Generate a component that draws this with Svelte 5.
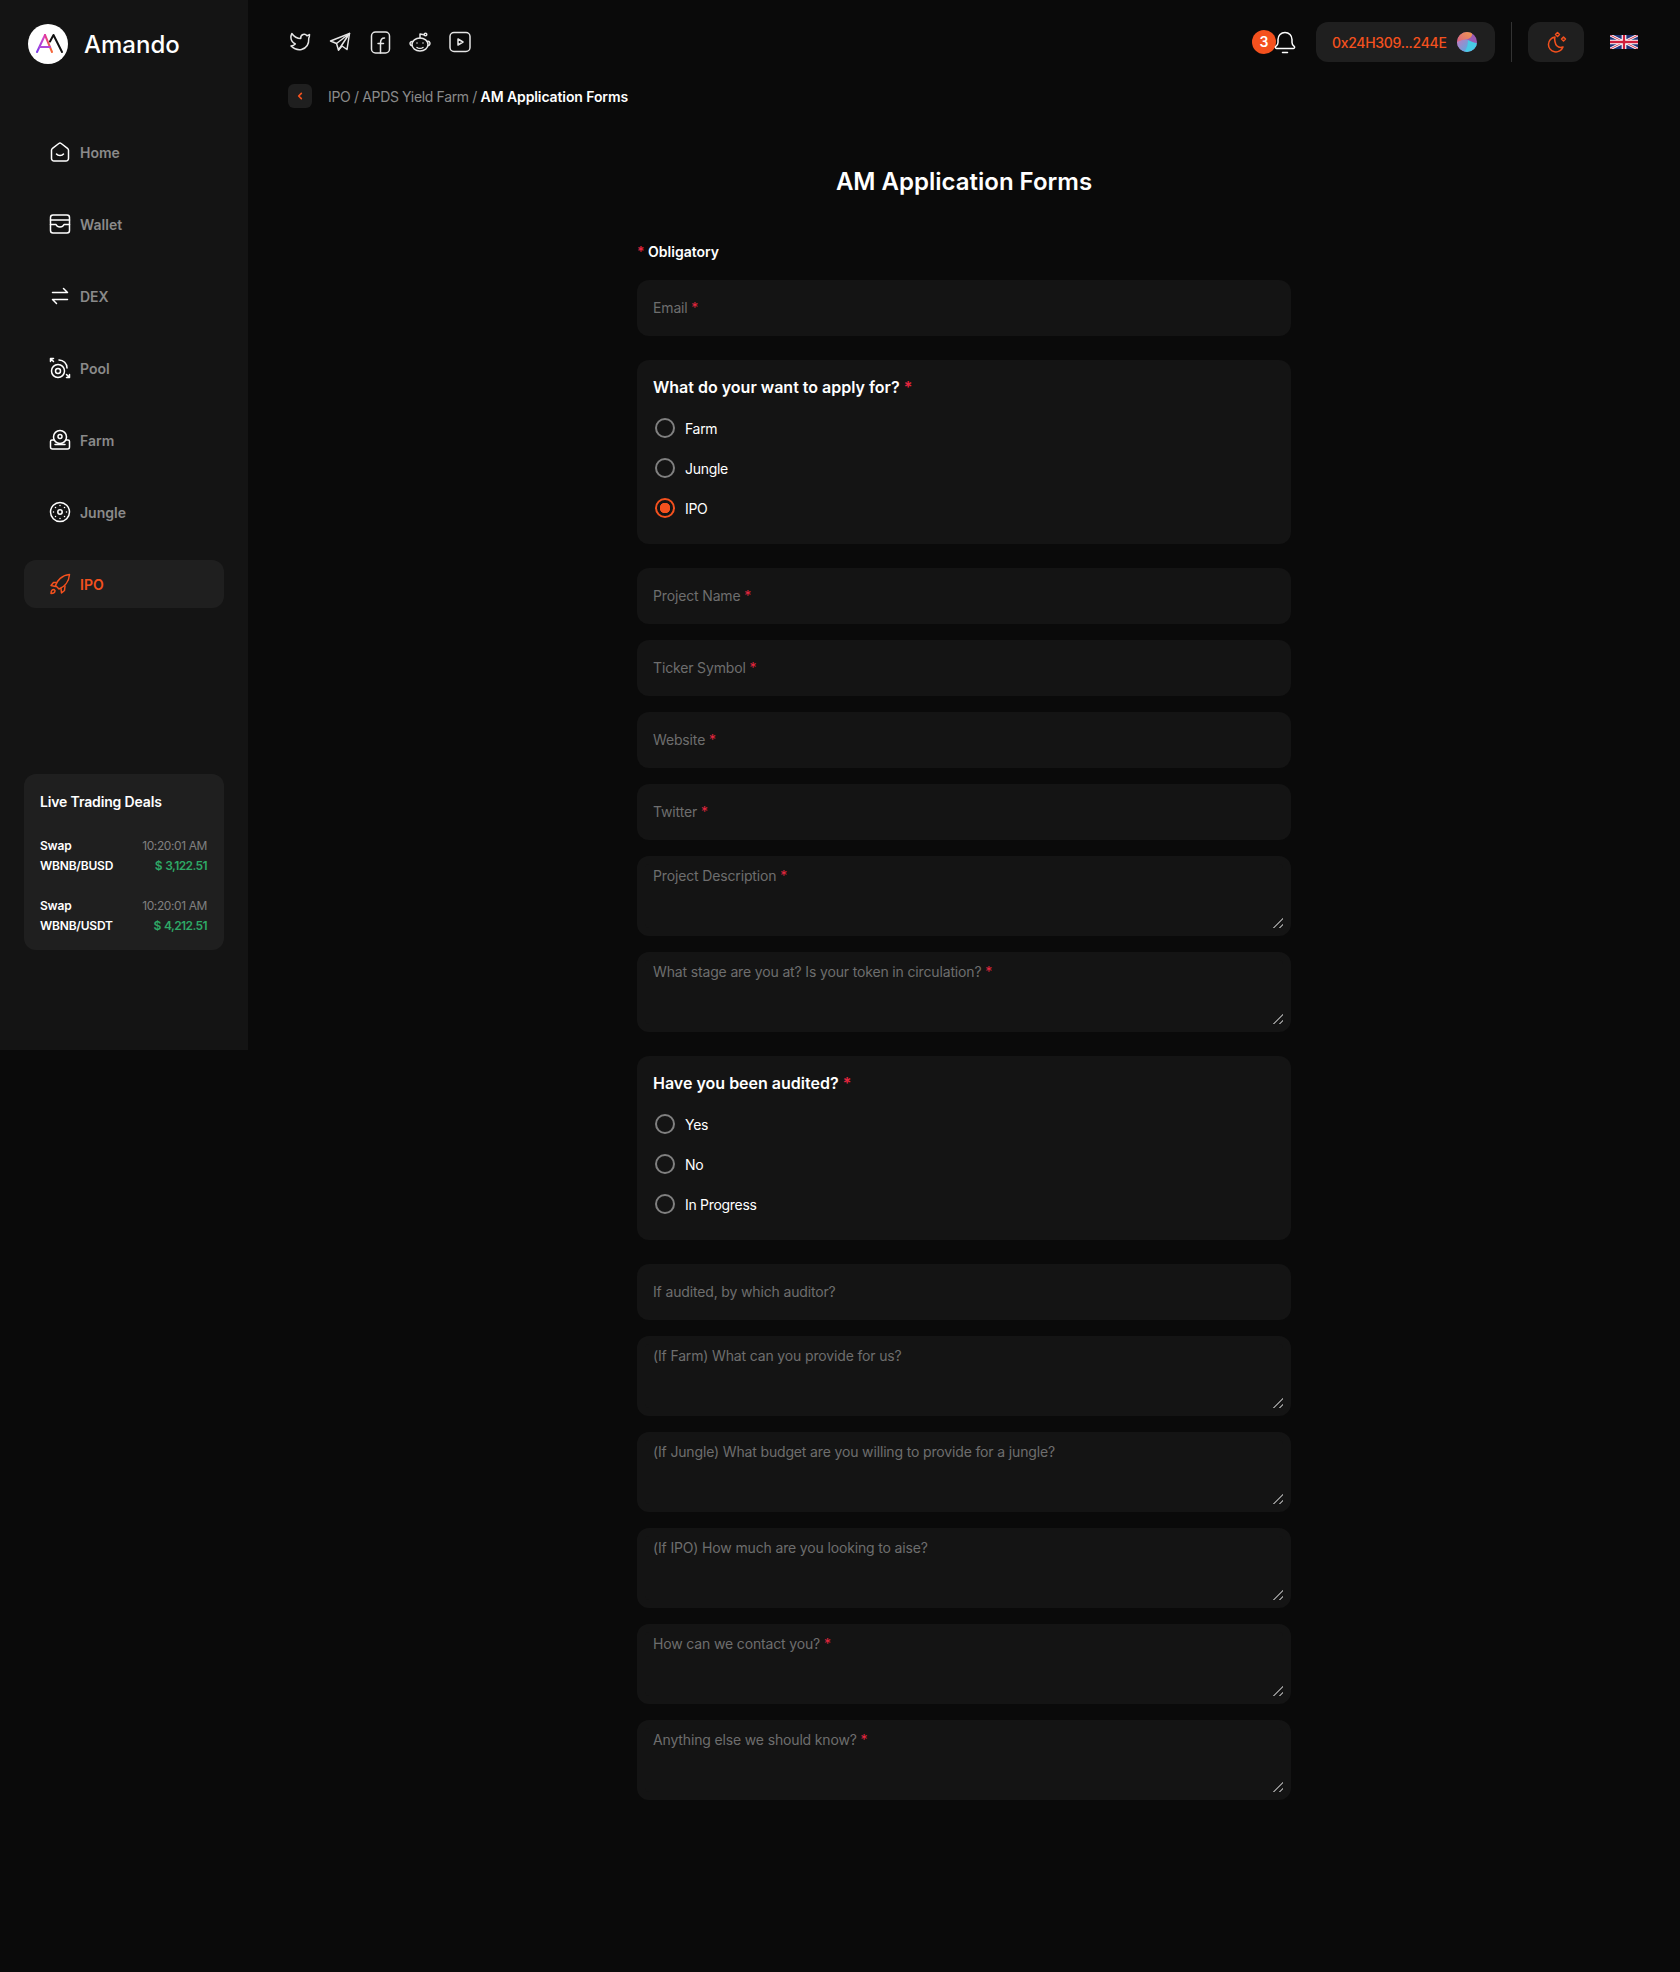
<script>
  const nav = [
    { label: 'Home', icon: 'home' },
    { label: 'Wallet', icon: 'wallet' },
    { label: 'DEX', icon: 'dex' },
    { label: 'Pool', icon: 'pool' },
    { label: 'Farm', icon: 'farm' },
    { label: 'Jungle', icon: 'jungle' },
    { label: 'IPO', icon: 'rocket', active: true }
  ];

  const deals = [
    { pair: 'WBNB/BUSD', value: '$ 3,122.51' },
    { pair: 'WBNB/USDT', value: '$ 4,212.51' }
  ];

  const socials = ['twitter', 'telegram', 'facebook', 'reddit', 'youtube'];

  const firstInputs = ['Project Name', 'Ticker Symbol', 'Website', 'Twitter'];
  const firstAreas = ['Project Description', 'What stage are you at? Is your token in circulation?'];
  const lastAreas = [
    { label: '(If Farm) What can you provide for us?' },
    { label: '(If Jungle) What budget are you willing to provide for a jungle?' },
    { label: '(If IPO) How much are you looking to aise?' },
    { label: 'How can we contact you?', required: true },
    { label: 'Anything else we should know?', required: true }
  ];
</script>

{#snippet icon(name)}
  <svg class="icon" viewBox="0 0 24 24" fill="none" stroke="currentColor" stroke-width="1.5" stroke-linecap="round" stroke-linejoin="round">
    {#if name === 'home'}
      <path d="M10.800 3.500 4.500 8.300A2.500 2.500 0 0 0 3.500 10.300V18.500a2.500 2.500 0 0 0 2.500 2.500h12a2.500 2.500 0 0 0 2.500-2.500v-8.200a2.500 2.500 0 0 0-1-2L13.200 3.500a2 2 0 0 0-2.400 0z" />
      <path d="M8.500 14c1.500 2 5.500 2 7 0" />
    {:else if name === 'wallet'}
      <rect x="2.500" y="3" width="19" height="18" rx="2.500" />
      <path d="M2.500 8h19M2.500 12.500h5.500c.8 2 2 2.500 4 2.500s3.200-.5 4-2.500h5.500" />
    {:else if name === 'dex'}
      <path d="M4.500 8.500h15l-4-4M19.500 15.500h-15l4 4" />
    {:else if name === 'pool'}
      <circle cx="10" cy="15" r="6.500" />
      <circle cx="10" cy="15" r="2.500" />
      <path d="M11 4a8 8 0 0 1 8 8" />
      <path d="M2.500 2.500l3 3M2.500 5.500v-3h3M18.500 18.500l3 3M21.500 18.500v3h-3" />
    {:else if name === 'farm'}
      <circle cx="12" cy="9" r="6.500" />
      <circle cx="12" cy="8.500" r="2" />
      <path d="M6 12H4a1.500 1.500 0 0 0-1.500 1.500V19A2 2 0 0 0 4.500 21h15a2 2 0 0 0 2-2v-5.500A1.500 1.500 0 0 0 20 12h-2" />
      <path d="M7 16.500h10" />
    {:else if name === 'jungle'}
      <circle cx="12" cy="12" r="9.500" />
      <circle cx="12" cy="12" r="2.200" />
      <path d="M12 5.500v.01M12 18.500v.01M5.500 12h.01M18.500 12h.01M7.500 7.500v.01M16.500 7.500v.01M7.500 16.500v.01M16.500 16.500v.01" />
    {:else if name === 'rocket'}
      <path d="M9 15 7.500 13.500C9 8.500 14 3 21.500 2.500c-.5 7.500-5.500 12.500-10.500 14.500z" />
      <path d="M8 10.500H5.500L3 13.500l4.500 1M13 16.500l.5 4.500 3-2.500.5-4.500" />
      <path d="M6 17.500c-1.500 0-3 1.500-3 4 2.500 0 4-1.500 4-3z" />
    {:else if name === 'twitter'}
      <path d="M21.500 4.500c-1 .8-1.800 1-2.500 1.200-1-1.300-2.500-1.800-4-1.200-1.700.7-2.500 2.300-2.200 4-3.300 0-6.800-1.800-9-5-.5 1-3 7 3.500 10.500-1 1-2.800 1.800-4.300 2 3 2.800 6.500 4.500 10.500 3.500 5-1.300 7.500-6 7.300-11.500.4-.5.700-1.700.7-3.500z" />
    {:else if name === 'telegram'}
      <path d="M21.500 3.500 2.500 11l6 2.500 2 6.500 3.500-4 5 3.500z" />
      <path d="M21.500 3.500 8.500 13.500M21.500 3.500 10.500 20" />
    {:else if name === 'facebook'}
      <rect x="3.500" y="2" width="18" height="21" rx="4" />
      <path d="M12.500 23v-10c0-3 1-5 4-5M10 13.500h5.500" />
    {:else if name === 'reddit'}
      <ellipse cx="12" cy="14.500" rx="8" ry="6.500" />
      <path d="M12 8V4l4 .8" />
      <circle cx="17.500" cy="4.500" r="1.300" />
      <path d="M4.800 11.500A2 2 0 1 0 3.500 15.500M19.200 11.500a2 2 0 1 1 1.300 4" />
      <path d="M9 17.500c1.500 1 4.500 1 6 0M9 13v.01M15 13v.01" />
    {:else if name === 'youtube'}
      <rect x="2" y="2.500" width="20" height="19" rx="4" />
      <path d="M10 9l5 3-5 3z" />
    {:else if name === 'bell'}
      <path d="M12 2.500c-4 0-7 3-7 7v3c0 2-1 3-2.200 3.800-.8.600-.4 2.200.7 2.200h17c1.100 0 1.500-1.600.7-2.200-1.200-.8-2.200-1.800-2.200-3.800v-3c0-4-3-7-7-7z" />
      <path d="M9.500 22.500h5" />
    {:else if name === 'moon'}
      <path d="M11 7a7.500 7.500 0 1 0 8 10c-2 .8-4.500.5-6.200-1.200S10.200 9 11 7z" />
      <path d="M13.500 2.500 15.500 4.500 13.500 6.500 11.500 4.500zM19.500 7 21.500 9 19.500 11 17.500 9z" />
    {/if}
  </svg>
{/snippet}

<div class="page">
  <aside class="sidebar">
    <div class="brand">
      <div class="logo">
        <svg viewBox="0 0 40 40" fill="none" stroke-width="2" stroke-linecap="round" stroke-linejoin="round">
          <defs>
            <linearGradient id="amLeft" x1="0" y1="1" x2="0.6" y2="0">
              <stop offset="0" stop-color="#7c3aed" />
              <stop offset="1" stop-color="#d946c8" />
            </linearGradient>
            <linearGradient id="amRight" x1="0" y1="0" x2="0.4" y2="1">
              <stop offset="0" stop-color="#e0389a" />
              <stop offset="1" stop-color="#f4663a" />
            </linearGradient>
          </defs>
          <path d="M9 28 17 11" stroke="url(#amLeft)" />
          <path d="M17 11 24 28" stroke="url(#amRight)" />
          <path d="M12 23h10" stroke="#b04ad8" />
          <path d="M22 17.500 25.500 11 34 28" stroke="#111" />
        </svg>
      </div>
      <span class="brand-name">Amando</span>
    </div>

    <nav class="nav">
      {#each nav as item}
        <a class="nav-link" class:active={item.active} href="#top">
          {@render icon(item.icon)}
          {item.label}
        </a>
      {/each}
    </nav>

    <section class="deals">
      <h3>Live Trading Deals</h3>
      {#each deals as deal}
        <div class="deal">
          <div class="deal-row"><b>Swap</b><span class="time">10:20:01 AM</span></div>
          <div class="deal-row"><b>{deal.pair}</b><span class="value">{deal.value}</span></div>
        </div>
      {/each}
    </section>
  </aside>

  <main class="main">
    <header class="topbar">
      <div class="socials">
        {#each socials as s}
          {@render icon(s)}
        {/each}
      </div>
      <div class="actions">
        <div class="bell">
          <span class="badge">3</span>
          {@render icon('bell')}
        </div>
        <button class="wallet">
          0x24H309...244E
          <svg class="avatar" viewBox="0 0 20 20">
            <defs>
              <clipPath id="avatarClip"><circle cx="10" cy="10" r="10" /></clipPath>
              <linearGradient id="avatarOrange" x1="1" y1="0" x2="0" y2="1">
                <stop offset="0" stop-color="#f09a4a" />
                <stop offset="1" stop-color="#d9608a" />
              </linearGradient>
              <linearGradient id="avatarBlue" x1="0" y1="0" x2="1" y2="1">
                <stop offset="0" stop-color="#c27ac0" />
                <stop offset="1" stop-color="#4fb0e4" />
              </linearGradient>
            </defs>
            <g clip-path="url(#avatarClip)">
              <rect width="20" height="20" fill="#9a5cb4" />
              <path d="M0 0h15c1 3-1 6-4 7-4 1-8 2-11 4z" fill="url(#avatarOrange)" />
              <path d="M0 10c4-2 9-3 11-2 1 3 0 8-3 12H0z" fill="url(#avatarBlue)" />
              <path d="M11 8c3 1 6 3 9 3v9H7c3-3 4-8 4-12z" fill="#48cbe6" />
            </g>
          </svg>
        </button>
        <span class="divider"></span>
        <button class="theme">{@render icon('moon')}</button>
        <svg class="flag" viewBox="0 0 60 30">
          <rect width="60" height="30" fill="#1f3278" />
          <path d="M0 0l60 30M60 0L0 30" stroke="#fff" stroke-width="6" />
          <path d="M0 0l60 30M60 0L0 30" stroke="#cf1f3c" stroke-width="2" />
          <path d="M30 0v30M0 15h60" stroke="#fff" stroke-width="10" />
          <path d="M30 0v30M0 15h60" stroke="#cf1f3c" stroke-width="5" />
        </svg>
      </div>
    </header>

    <div class="crumbs">
      <button class="back" aria-label="Back">
        <svg viewBox="0 0 24 24" fill="none" stroke="currentColor" stroke-width="2.500" stroke-linecap="round" stroke-linejoin="round"><path d="M14 8l-4 4 4 4" /></svg>
      </button>
      <span>IPO / APDS Yield Farm / <b>AM Application Forms</b></span>
    </div>

    <h1>AM Application Forms</h1>

    <form class="form">
      <p class="obligatory"><i>*</i> Obligatory</p>

      <label class="field">
        <input type="text" />
        <span class="hint">Email <i>*</i></span>
      </label>

      <fieldset class="card">
        <legend>What do your want to apply for? <i>*</i></legend>
        <label class="radio"><input type="radio" name="apply" />Farm</label>
        <label class="radio"><input type="radio" name="apply" />Jungle</label>
        <label class="radio"><input type="radio" name="apply" checked />IPO</label>
      </fieldset>

      <div class="stack">
        {#each firstInputs as label}
          <label class="field">
            <input type="text" />
            <span class="hint">{label} <i>*</i></span>
          </label>
        {/each}
        {#each firstAreas as label}
          <label class="field area">
            <textarea></textarea>
            <span class="hint">{label} <i>*</i></span>
          </label>
        {/each}
      </div>

      <fieldset class="card">
        <legend>Have you been audited? <i>*</i></legend>
        <label class="radio"><input type="radio" name="audit" />Yes</label>
        <label class="radio"><input type="radio" name="audit" />No</label>
        <label class="radio"><input type="radio" name="audit" />In Progress</label>
      </fieldset>

      <div class="stack">
        <label class="field">
          <input type="text" />
          <span class="hint">If audited, by which auditor?</span>
        </label>
        {#each lastAreas as item}
          <label class="field area">
            <textarea></textarea>
            <span class="hint">{item.label}{#if item.required}{' '}<i>*</i>{/if}</span>
          </label>
        {/each}
      </div>
    </form>
  </main>
</div>

<style>
  :global(body) {
    margin: 0;
    background: #0a0a0a;
  }

  .page {
    display: flex;
    align-items: flex-start;
    min-height: 1972px;
    font-family: Inter, "Noto Sans", sans-serif;
    color: #fff;
  }

  .icon {
    width: 24px;
    height: 24px;
    flex: none;
  }

  .sidebar {
    width: 248px;
    height: 1050px;
    flex: none;
    background: #141414;
    box-sizing: border-box;
    padding: 24px;
    display: flex;
    flex-direction: column;
  }

  .brand {
    display: flex;
    align-items: center;
    gap: 16px;
    padding-left: 4px;
  }

  .logo {
    width: 40px;
    height: 40px;
    border-radius: 50%;
    background: #fff;
  }

  .logo svg {
    display: block;
  }

  .brand-name {
    font-size: 24px;
    font-weight: 500;
  }

  .nav {
    margin-top: 64px;
    display: flex;
    flex-direction: column;
    gap: 24px;
  }

  .nav-link {
    height: 48px;
    padding-left: 24px;
    display: flex;
    align-items: center;
    gap: 8px;
    border-radius: 12px;
    color: #8a8a8a;
    font-size: 14px;
    font-weight: 600;
    text-decoration: none;
  }

  .nav-link .icon {
    color: #fff;
  }

  .nav-link.active {
    background: #1f1f1f;
    color: #f4511e;
  }

  .nav-link.active .icon {
    color: #f4511e;
  }

  .deals {
    margin-top: 166px;
    background: #1f1f1f;
    border-radius: 12px;
    padding: 16px 17px 14px 16px;
    height: 176px;
    box-sizing: border-box;
  }

  .deals h3 {
    margin: 0 0 22px;
    font-size: 14px;
    line-height: 24px;
    font-weight: 600;
    letter-spacing: -0.15px;
  }

  .deal + .deal {
    margin-top: 20px;
  }

  .deal-row {
    display: flex;
    justify-content: space-between;
    font-size: 12px;
    line-height: 20px;
  }

  .deal-row b {
    font-weight: 600;
    letter-spacing: -0.2px;
  }

  .time {
    color: #808080;
    letter-spacing: -0.4px;
  }

  .value {
    color: #2ea866;
    font-weight: 600;
    letter-spacing: -0.6px;
    word-spacing: 1px;
  }

  .main {
    flex: 1;
    min-width: 0;
    padding: 22px 40px 0;
  }

  .topbar {
    height: 40px;
    padding-right: 2px;
    display: flex;
    justify-content: space-between;
    align-items: center;
  }

  .socials {
    display: flex;
    gap: 16px;
  }

  .socials .icon {
    color: #e6e6e6;
  }

  .actions {
    display: flex;
    align-items: center;
  }

  .bell {
    display: flex;
    align-items: center;
    margin-right: 19px;
  }

  .bell .icon {
    margin-left: -3px;
  }

  .badge {
    width: 24px;
    height: 24px;
    border-radius: 50%;
    background: #f4511e;
    font-size: 14px;
    font-weight: 600;
    line-height: 24px;
    text-align: center;
  }

  .wallet {
    width: 179px;
    height: 40px;
    padding: 0 18px 0 16px;
    display: flex;
    align-items: center;
    justify-content: space-between;
    border: 0;
    border-radius: 12px;
    background: #1f1f1f;
    color: #f4511e;
    font: 500 14px Inter, sans-serif;
    letter-spacing: -0.3px;
  }

  .avatar {
    width: 20px;
    height: 20px;
  }

  .divider {
    width: 1px;
    height: 40px;
    margin: 0 16px;
    background: #333;
  }

  .theme {
    width: 56px;
    height: 40px;
    padding: 0;
    display: flex;
    align-items: center;
    justify-content: center;
    border: 0;
    border-radius: 12px;
    background: #1f1f1f;
    color: #f4511e;
  }

  .flag {
    width: 28px;
    height: 14px;
    margin-left: 26px;
  }

  .crumbs {
    margin-top: 22px;
    display: flex;
    align-items: center;
    gap: 16px;
    font-size: 14px;
    letter-spacing: -0.35px;
    color: #8a8a8a;
  }

  .crumbs b {
    color: #fff;
    font-weight: 600;
    letter-spacing: -0.1px;
  }

  .back {
    width: 24px;
    height: 24px;
    padding: 0;
    border: 0;
    border-radius: 6px;
    background: #1f1f1f;
    color: #f4511e;
  }

  .back svg {
    display: block;
    width: 16px;
    height: 16px;
    margin: 4px;
  }

  h1 {
    margin: 56px 0 0;
    font-size: 24px;
    line-height: 36px;
    font-weight: 600;
    text-align: center;
  }

  .form {
    width: 654px;
    margin: 42px auto 0;
  }

  .obligatory {
    margin: 0 0 18px;
    font-size: 14px;
    line-height: 20px;
    font-weight: 600;
  }

  i {
    font-style: normal;
    color: #e5263f;
  }

  .field {
    display: block;
    position: relative;
    height: 56px;
  }

  .field.area {
    height: 80px;
  }

  .field input,
  .field textarea {
    display: block;
    width: 100%;
    height: 100%;
    box-sizing: border-box;
    border: 0;
    border-radius: 12px;
    background: #141414;
    outline: none;
    color: #fff;
    font: 14px Inter, sans-serif;
    padding: 16px;
  }

  /* thick border keeps the native resize grip inset from the corner */
  .field textarea {
    resize: vertical;
    border: 8px solid #141414;
    padding: 8px;
  }

  .field textarea::-webkit-resizer {
    background: linear-gradient(
      135deg,
      transparent 66%,
      #8a8a8a 66% 73%,
      transparent 73% 86%,
      #8a8a8a 86% 93%,
      transparent 93%
    );
  }

  .hint {
    position: absolute;
    left: 16px;
    top: 18px;
    font-size: 14px;
    line-height: 20px;
    letter-spacing: -0.15px;
    color: #6e6e6e;
    pointer-events: none;
  }

  .area .hint {
    top: 10px;
  }

  .card {
    margin: 24px 0;
    padding: 14px 16px 0;
    height: 184px;
    box-sizing: border-box;
    border: 0;
    border-radius: 12px;
    background: #141414;
  }

  .card legend {
    float: left;
    width: 100%;
    padding: 0;
    margin-bottom: 8px;
    font-size: 16px;
    line-height: 26px;
    font-weight: 600;
  }

  .radio {
    clear: both;
    display: flex;
    align-items: center;
    gap: 10px;
    height: 40px;
    font-size: 14px;
    letter-spacing: -0.3px;
  }

  .radio input {
    appearance: none;
    width: 20px;
    height: 20px;
    margin: 0 0 0 2px;
    border: 2px solid #808080;
    border-radius: 50%;
    box-sizing: border-box;
  }

  .radio input:checked {
    border-color: #f4511e;
    background: radial-gradient(circle, #f4511e 0 5px, transparent 5.5px);
  }

  .stack {
    display: flex;
    flex-direction: column;
    gap: 16px;
  }
</style>
